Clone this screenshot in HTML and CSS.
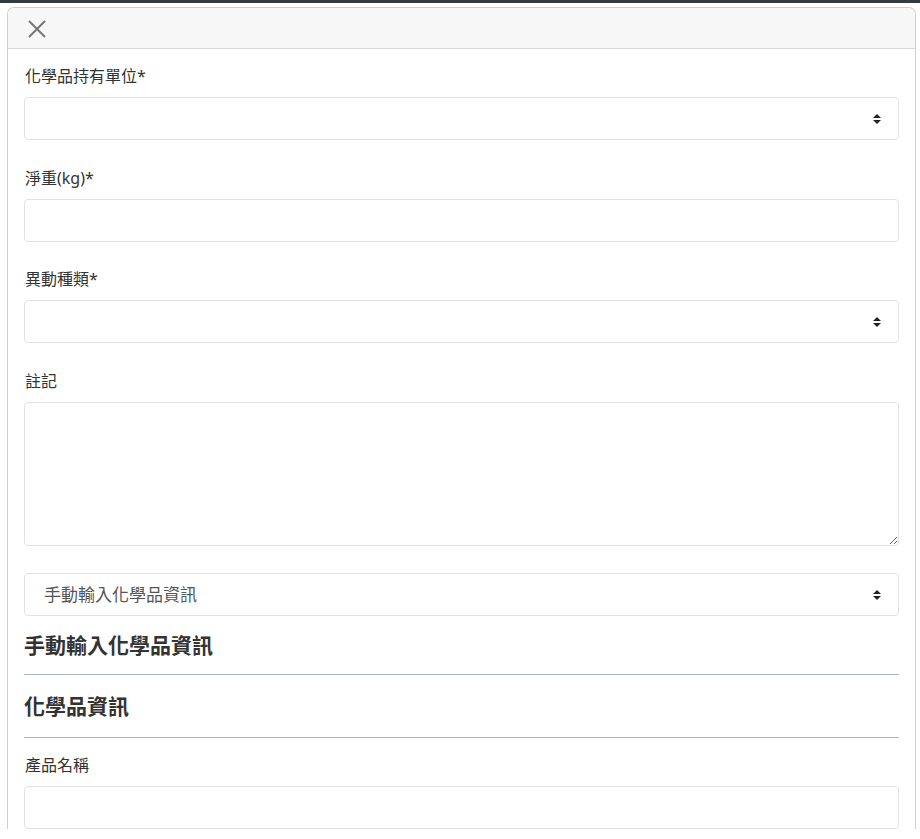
FILE: index.html
```html
<!DOCTYPE html>
<html lang="zh-Hant">
<head>
    <meta charset="UTF-8">
    <meta name="viewport" content="width=device-width, initial-scale=1.0">
    <title>化學品異動</title>
    <link rel="stylesheet" href="styles.css">
</head>
<body>
    <div class="top-bar"></div>

    <div class="modal">
        <div class="modal-header">
            <button class="close-btn" aria-label="close">
                <svg width="18" height="18" viewBox="0 0 18 18">
                    <path d="M1 1 L17 17 M17 1 L1 17" stroke="#777" stroke-width="2" fill="none"/>
                </svg>
            </button>
        </div>

        <div class="modal-body">
            <div class="form-group">
                <label for="unit">化學品持有單位*</label>
                <div class="select-wrap">
                    <select id="unit" class="form-control"><option></option></select>
                    <svg class="select-arrow" width="8" height="12" viewBox="0 0 8 12"><path d="M4 1 L8 5 L0 5 Z M0 7 L8 7 L4 11 Z" fill="#222"/></svg>
                </div>
            </div>

            <div class="form-group tight">
                <label for="weight">淨重(kg)*</label>
                <input type="text" id="weight" class="form-control">
            </div>

            <div class="form-group">
                <label for="type">異動種類*</label>
                <div class="select-wrap">
                    <select id="type" class="form-control"><option></option></select>
                    <svg class="select-arrow" width="8" height="12" viewBox="0 0 8 12"><path d="M4 1 L8 5 L0 5 Z M0 7 L8 7 L4 11 Z" fill="#222"/></svg>
                </div>
            </div>

            <div class="form-group">
                <label for="note">註記</label>
                <textarea id="note" class="form-control note"></textarea>
            </div>

            <div class="select-wrap">
                <select id="mode" class="form-control mode-select">
                    <option>手動輸入化學品資訊</option>
                </select>
                <svg class="select-arrow" width="8" height="12" viewBox="0 0 8 12"><path d="M4 1 L8 5 L0 5 Z M0 7 L8 7 L4 11 Z" fill="#222"/></svg>
            </div>

            <h4 class="section-title first">手動輸入化學品資訊</h4>
            <hr>
            <h4 class="section-title second">化學品資訊</h4>
            <hr>

            <div class="form-group">
                <label for="product">產品名稱</label>
                <input type="text" id="product" class="form-control">
            </div>
        </div>
    </div>
</body>
</html>
```

FILE: styles.css
```css
*{
    margin:0;
    padding:0;
    box-sizing: border-box;
}
body{
    font-family: "Noto Sans", "Noto Sans CJK TC", sans-serif;
    color: #333;
    background-color: #fff;
    font-size: 16px;
    overflow: hidden;
}
.top-bar{
    height: 3px;
    background-color: #343a40;
}
.modal{
    margin: 4px 4px 0 7px;
    border: 1px solid #d0d0d0;
    border-bottom: none;
    border-radius: 7px 7px 0 0;
    background-color: #fff;
    width: 909px;
}
.modal-header{
    height: 41px;
    background-color: #f7f7f7;
    border-bottom: 1px solid #d5d5d5;
    border-radius: 7px 7px 0 0;
    display: flex;
    align-items: center;
    padding-left: 20px;
}
.close-btn{
    border: none;
    background: none;
    cursor: pointer;
    display: flex;
    padding-top: 1px;
}
.modal-body{
    padding: 16px 16px 0 16px;
}
.form-group{
    margin-bottom: 27px;
}
.form-group.tight{
    margin-bottom: 26px;
}
label{
    display: block;
    height: 24px;
    line-height: 22px;
    margin-bottom: 8px;
    padding-left: 1px;
}
.form-control{
    display: block;
    width: 100%;
    height: 43px;
    border: 1px solid #e2e2e2;
    border-radius: 4px;
    background-color: #fff;
    font-family: inherit;
    font-size: 16px;
    color: #555;
    padding: 0 19px;
    outline: none;
}
select.form-control{
    appearance: none;
    -webkit-appearance: none;
}
.mode-select{
    font-size: 17px;
}
.select-wrap{
    position: relative;
}
.select-arrow{
    position: absolute;
    right: 18px;
    top: 16px;
    pointer-events: none;
}
.note{
    height: 144px;
    resize: vertical;
    padding: 8px 12px;
}
.section-title{
    font-size: 21px;
    font-weight: bold;
    line-height: 28px;
    margin-top: 17px;
    margin-bottom: 17px;
    color: #333;
}
.section-title.first{
    margin-top: 15px;
    margin-bottom: 15px;
}
hr{
    border: none;
    border-top: 1px solid #a9b4bf;
    margin-bottom: 16px;
}
```
